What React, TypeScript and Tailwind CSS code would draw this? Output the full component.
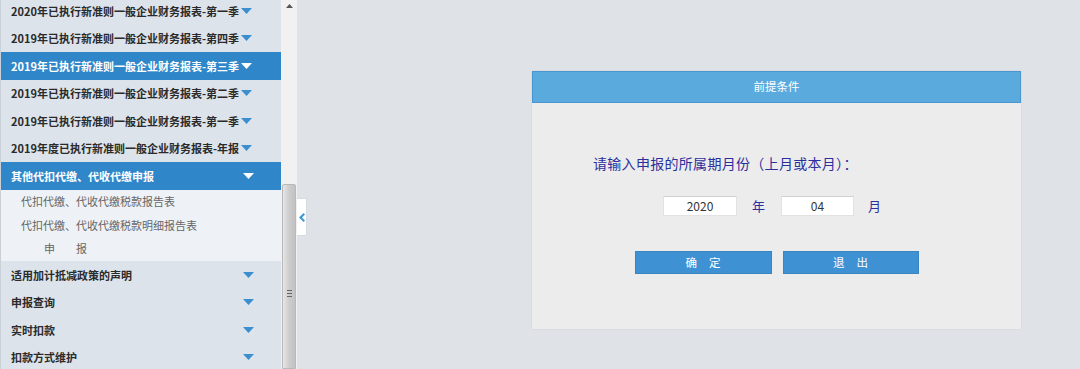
import React from "react";

const FONT = '"Microsoft YaHei", "Noto Sans CJK SC", "Noto Sans", sans-serif';

function Tri({ white }: { white?: boolean }) {
  return (
    <svg width="11" height="6" viewBox="0 0 11 6" className="shrink-0">
      <path d="M0 0 L11 0 L5.5 6 Z" fill={white ? "#ffffff" : "#3b8fd0"} />
    </svg>
  );
}

function Row({ text, active, spread }: { text: string; active?: boolean; spread?: boolean }) {
  return (
    <div
      className={`h-[27.5px] flex items-center pl-[10px] shrink-0 ${
        active ? "bg-[#2f87c9] text-white" : "text-[#2a2a2a]"
      }`}
    >
      <span className={`whitespace-nowrap font-bold text-[11px] ${spread ? "w-[232px]" : ""}`}>{text}</span>
      <span className={spread ? "" : "ml-[2px]"}>
        <Tri white={active} />
      </span>
    </div>
  );
}

export default function App() {
  return (
    <div className="w-[1080px] h-[369px] flex overflow-hidden bg-[#dfe3e8]" style={{ fontFamily: FONT }}>
      {/* Sidebar */}
      <div className="w-[281px] shrink-0 bg-[#dde3ea] border-l border-[#c9d0d8] flex flex-col overflow-hidden">
        <div className="-mt-[3px] flex flex-col">
          <Row text="2020年已执行新准则一般企业财务报表-第一季" />
          <Row text="2019年已执行新准则一般企业财务报表-第四季" />
          <Row text="2019年已执行新准则一般企业财务报表-第三季" active />
          <Row text="2019年已执行新准则一般企业财务报表-第二季" />
          <Row text="2019年已执行新准则一般企业财务报表-第一季" />
          <Row text="2019年度已执行新准则一般企业财务报表-年报" />
          <Row text="其他代扣代缴、代收代缴申报" active spread />
          <div className="bg-[#eef2f6] flex flex-col pb-[1px] text-[11px] text-[#666]">
            <div className="h-[23.5px] flex items-center pl-[20px]">代扣代缴、代收代缴税款报告表</div>
            <div className="h-[23.5px] flex items-center pl-[20px]">代扣代缴、代收代缴税款明细报告表</div>
            <div className="h-[23.5px] flex items-center pl-[43px] gap-[21px]">
              <span>申</span>
              <span>报</span>
            </div>
          </div>
          <Row text="适用加计抵减政策的声明" spread />
          <Row text="申报查询" spread />
          <Row text="实时扣款" spread />
          <Row text="扣款方式维护" spread />
        </div>
      </div>

      {/* Scrollbar */}
      <div className="w-[16px] shrink-0 bg-[#f1f1f1] flex flex-col">
        <div className="h-[184px] flex justify-center pt-[4px]">
          <svg width="7" height="4" viewBox="0 0 7 4">
            <path d="M0 4 L3.5 0 L7 4 Z" fill="#555" />
          </svg>
        </div>
        <div className="flex-1 mx-[1px] rounded-t-[2px] border border-[#b9b9b9] bg-gradient-to-r from-[#e6e6e6] via-[#cdcdcd] to-[#c2c2c2] flex flex-col items-center pt-[105px]">
          <div className="flex flex-col gap-[2px]">
            <div className="w-[5px] h-[1px] bg-[#666]" />
            <div className="w-[5px] h-[1px] bg-[#666]" />
            <div className="w-[5px] h-[1px] bg-[#666]" />
          </div>
        </div>
      </div>

      {/* Main */}
      <div className="flex-1 relative bg-[#dfe3e8]">
        <div className="absolute left-0 top-[198px] w-[10px] h-[38px] bg-white border border-l-0 border-[#d6dbe0] flex items-center justify-center">
          <svg width="6" height="9" viewBox="0 0 6 9">
            <path d="M4.6 0 L6 1.4 L3 4.5 L6 7.6 L4.6 9 L0 4.5 Z" fill="#3b9ad8" />
          </svg>
        </div>

        <div className="ml-[235px] mt-[71px] w-[489px] h-[258px] bg-[#ececec] shadow-[0_0_2px_rgba(0,0,0,0.08)] flex flex-col">
          <div className="h-[32px] bg-[#5aaade] border border-[#4a97cf] flex items-center justify-center text-white text-[11.5px]">
            前提条件
          </div>
          <div className="pl-[61px] mt-[51px] text-[14px] tracking-[0.3px] text-[#2b2f9c] leading-[18px] whitespace-nowrap">
            请输入申报的所属期月份（上月或本月）：
          </div>
          <div className="flex items-center mt-[24px] ml-[131px] text-[13px]">
            <div className="w-[74px] h-[20px] bg-white border border-[#e2e2e2] border-t-[#d0d0d0] flex items-center justify-center text-[12px] text-[#333]">
              2020
            </div>
            <span className="ml-[15px] text-[#2b2f9c]">年</span>
            <div className="ml-[16px] w-[73px] h-[20px] bg-white border border-[#e2e2e2] border-t-[#d0d0d0] flex items-center justify-center text-[12px] text-[#333]">
              04
            </div>
            <span className="ml-[14px] text-[#2b2f9c]">月</span>
          </div>
          <div className="flex justify-center gap-[11px] mt-[35px]">
            <div className="w-[137px] h-[23px] bg-[#3e92d4] border border-[#3a84c0] flex items-center justify-center gap-[12px] text-white text-[11.5px]">
              <span>确</span>
              <span>定</span>
            </div>
            <div className="w-[136px] h-[23px] bg-[#3e92d4] border border-[#3a84c0] flex items-center justify-center gap-[12px] text-white text-[11.5px]">
              <span>退</span>
              <span>出</span>
            </div>
          </div>
        </div>
      </div>
    </div>
  );
}
